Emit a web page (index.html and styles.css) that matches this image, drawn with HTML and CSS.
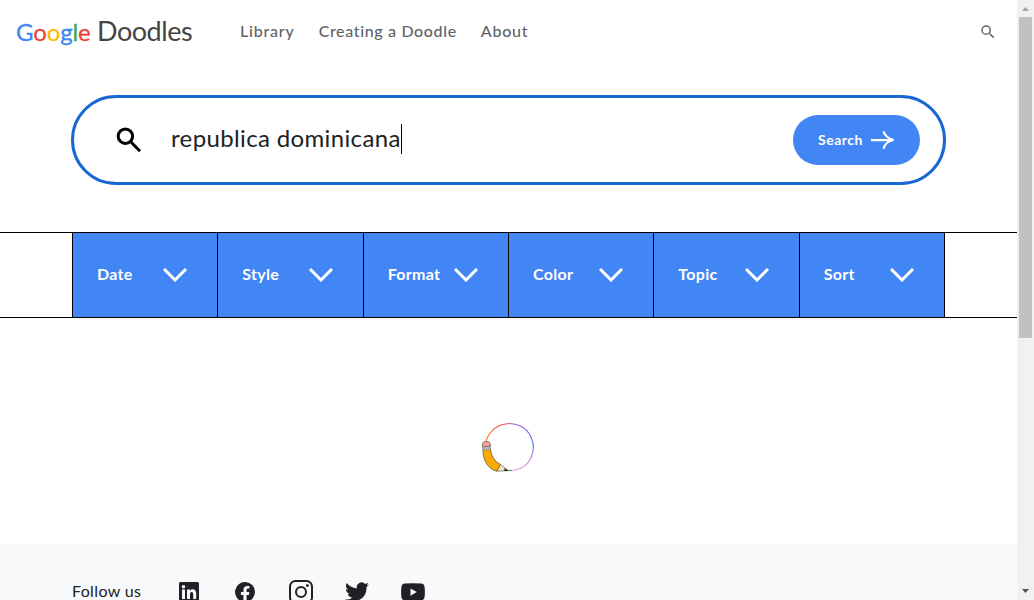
FILE: index.html
```html
<!DOCTYPE html>
<html lang="en">
<head>
<meta charset="utf-8">
<title>Google Doodles</title>
<link rel="stylesheet" href="styles.css">
</head>
<body>
<div class="page">
  <header class="header">
    <a class="logo"><span class="google"><span class="b">G</span><span class="r">o</span><span class="y">o</span><span class="b">g</span><span class="g">l</span><span class="r">e</span></span><span class="doodles">Doodles</span></a>
    <nav class="nav"><a class="n1">Library</a><a class="n2">Creating a Doodle</a><a class="n3">About</a></nav>
    <svg class="header-search" viewBox="0 0 24 24"><path d="M15.5 14h-.79l-.28-.27A6.47 6.47 0 0 0 16 9.5 6.5 6.5 0 1 0 9.5 16c1.61 0 3.09-.59 4.23-1.57l.27.28v.79l5 4.99L20.49 19zM9.5 14a4.5 4.5 0 1 1 0-9 4.5 4.5 0 0 1 0 9z"/></svg>
  </header>
  <form class="search">
    <svg class="search-icon" viewBox="0 0 26 26"><circle cx="9.4" cy="9.2" r="7.2"/><path d="M14.5 14.5 24 24.2"/></svg>
    <span class="query">republica dominicana</span><span class="caret"></span>
    <button type="button" class="submit"><span>Search</span><svg viewBox="0 0 24 20"><path d="M0 10.2C7 9.700 14 10.400 22 10M12.500 1.300C14 6.200 17 8.600 22.500 10 17 11.200 13.500 14 12.600 18.700"/></svg></button>
  </form>
  <div class="filters">
    <div class="filter"><span class="f1">Date</span><svg viewBox="0 0 24 14"><path d="M1 1 12 12 23 1"/></svg></div>
    <div class="filter"><span class="f2">Style</span><svg viewBox="0 0 24 14"><path d="M1 1 12 12 23 1"/></svg></div>
    <div class="filter"><span class="f3">Format</span><svg viewBox="0 0 24 14"><path d="M1 1 12 12 23 1"/></svg></div>
    <div class="filter"><span class="f4">Color</span><svg viewBox="0 0 24 14"><path d="M1 1 12 12 23 1"/></svg></div>
    <div class="filter"><span class="f5">Topic</span><svg viewBox="0 0 24 14"><path d="M1 1 12 12 23 1"/></svg></div>
    <div class="filter"><span class="f6">Sort</span><svg viewBox="0 0 24 14"><path d="M1 1 12 12 23 1"/></svg></div>
  </div>
  <main class="results">
    <svg class="loader" viewBox="0 0 56 54">
      <defs>
        <linearGradient id="warm" x1="0" y1="1" x2="1" y2="0"><stop offset="0" stop-color="#ff8a24"/><stop offset=".5" stop-color="#f4552f"/><stop offset="1" stop-color="#dc5878"/></linearGradient>
        <linearGradient id="cool" x1="0" y1="0" x2="1" y2="1"><stop offset="0" stop-color="#b45ae0"/><stop offset=".5" stop-color="#8b70ee"/><stop offset="1" stop-color="#3b82f6"/></linearGradient>
        <linearGradient id="pink" x1="1" y1="0" x2="0" y2="1"><stop offset="0" stop-color="#5b8df5"/><stop offset=".45" stop-color="#d98fd8"/><stop offset="1" stop-color="#f5a0cf"/></linearGradient>
      </defs>
      <g fill="none" stroke-width="1.2">
        <path stroke="url(#warm)" d="M6 21Q12 4 30 3.500"/>
        <path stroke="url(#cool)" d="M30 3.500Q51 5 53.500 27"/>
        <path stroke="url(#pink)" d="M53.500 27Q52 48 32 50.500"/>
        <path stroke="#48a36a" d="M26 50.500h6"/>
      </g>
      <path d="M3 28.500C2 40 9 50 17 51.200L20.500 44.500Q11.500 40 10.300 28.500Z" fill="#f9ab00" stroke="#665b4b" stroke-width=".8"/>
      <path d="M17 51.200 20.500 44.500 28 50.500Z" fill="#f8e6cd" stroke="#665b4b" stroke-width=".7"/>
      <path d="m24.500 48.300 4 2.200-4 .7Z" fill="#222"/>
      <path d="M2.500 26.700 10.500 26.200V29.500L3 30.200Z" fill="#aeb4bb" stroke="#777" stroke-width=".4"/>
      <path d="M2.500 26.700V24Q3 21.500 5 21.500H8Q10.300 21.700 10.500 26.200Z" fill="#f5a29b" stroke="#75605e" stroke-width=".8"/>
    </svg>
  </main>
  <footer class="footer">
    <span class="follow">Follow us</span>
    <svg viewBox="0 0 24 24"><path fill-rule="evenodd" d="M3.500 2h17A1.500 1.500 0 0 1 22 3.500v17a1.500 1.500 0 0 1-1.500 1.500h-17A1.500 1.500 0 0 1 2 20.500v-17A1.500 1.500 0 0 1 3.500 2zM5 9.500V19h3V9.500zM6.500 4.900a1.750 1.750 0 1 0 0 3.500 1.750 1.750 0 0 0 0-3.500zM10 9.500V19h3v-4.700c0-1.300.5-2.300 1.700-2.300s1.500 1 1.500 2.300V19h3v-5.200c0-2.700-1.200-4.500-3.500-4.500-1.300 0-2.200.7-2.700 1.500V9.500z"/></svg>
    <svg viewBox="0 0 24 24"><path d="M22 12a10 10 0 1 0-11.560 9.880V14.900H7.900V12h2.540V9.800c0-2.510 1.490-3.900 3.780-3.900 1.090 0 2.240.2 2.240.2v2.460H15.200c-1.240 0-1.630.77-1.630 1.560V12h2.780l-.45 2.900h-2.330v6.980A10 10 0 0 0 22 12z"/></svg>
    <svg viewBox="0 0 24 24" class="outline"><rect x="1" y="1" width="22" height="22" rx="5.500"/><circle cx="12" cy="12" r="5"/><circle class="dot" cx="18.400" cy="5.600" r="1.450"/></svg>
    <svg viewBox="0 0 24 24"><path d="M24 4.600a10 10 0 0 1-2.830.8 4.900 4.900 0 0 0 2.170-2.700c-1 .6-2 1-3.130 1.200a4.920 4.920 0 0 0-8.390 4.500A14 14 0 0 1 1.670 3.100a4.920 4.920 0 0 0 1.520 6.600A4.900 4.900 0 0 1 1 9v.1a4.930 4.930 0 0 0 3.950 4.800 5 5 0 0 1-2.220.1 4.920 4.920 0 0 0 4.600 3.400A9.900 9.900 0 0 1 0 19.500 14 14 0 0 0 21.540 7.100 10 10 0 0 0 24 4.600z"/></svg>
    <svg viewBox="0 0 24 24"><path fill-rule="evenodd" d="M4 3.600Q12 3 20 3.600 23 3.800 23.500 6.500 24.300 12 23.500 17.500 23 20.200 20 20.400 12 21 4 20.400 1 20.200.5 17.500-.3 12 .5 6.500 1 3.800 4 3.600zM9.500 8.500v7.200l6.300-3.600z"/></svg>
  </footer>
</div>
<div class="scrollbar">
  <svg viewBox="0 0 17 17"><path fill="#a3a3a3" d="M5 11h7L8.500 7z"/></svg>
  <div class="thumb"></div>
  <svg class="down" viewBox="0 0 17 17"><path fill="#505050" d="M5 6h7l-3.500 4z"/></svg>
</div>
</body>
</html>
```
FILE: styles.css
```css
* { box-sizing: border-box; }
body {
  margin: 0;
  width: 1034px;
  height: 600px;
  overflow: hidden;
  display: flex;
  background: #fff;
  color: #202124;
  font-family: Lato, "Open Sans", sans-serif;
}
.page { width: 1017px; height: 600px; overflow: hidden; }
.header { display: flex; align-items: center; height: 64px; padding: 0 20px 0 16px; }
.logo { display: flex; align-items: baseline; width: 224px; padding-bottom: 2px; line-height: 32px; white-space: nowrap; }
.google { width: 81px; font-size: 24px; letter-spacing: -.15px; -webkit-text-stroke: .3px; }
.doodles { font-size: 27px; letter-spacing: -.45px; color: #444; }
.b { color: #4285f4; }
.r { color: #ea4335; }
.y { color: #fbbc04; }
.g { color: #34a853; }
.nav { display: flex; gap: 24px; padding-bottom: 4px; color: #5f6368; font-size: 16px; font-weight: 500; white-space: nowrap; }
.n1 { letter-spacing: .8px; }
.n2 { letter-spacing: .65px; }
.n3 { letter-spacing: .75px; }
.header-search { width: 18px; height: 18px; margin-left: auto; fill: #5f6368; }
.search {
  display: flex;
  align-items: center;
  width: 875px;
  height: 90px;
  margin: 31px 0 0 71px;
  padding: 0 23px 0 42px;
  border: 3px solid #1967d2;
  border-radius: 45px;
}
.search-icon { width: 26px; height: 26px; margin-right: 29px; fill: none; stroke: #000; stroke-width: 3; }
.query { width: 230px; padding-bottom: 4px; font-size: 24px; line-height: 30px; letter-spacing: .36px; white-space: nowrap; }
.caret { width: 1px; height: 30px; margin-bottom: 2px; background: #000; }
.submit {
  display: flex;
  align-items: center;
  width: 127px;
  height: 50px;
  margin-left: auto;
  padding: 0 25px;
  justify-content: space-between;
  border: 0;
  border-radius: 25px;
  background: #4285f4;
  color: #fff;
  font: 700 14px Lato, sans-serif;
}
.submit span { padding-bottom: 2px; letter-spacing: .5px; }
.submit svg { width: 24px; height: 20px; fill: none; stroke: #fff; stroke-width: 2.2; }
.filters {
  display: grid;
  grid-template-columns: repeat(5, 145.33px) 1fr;
  height: 86px;
  margin-top: 47px;
  padding: 0 72px;
  border: solid #000;
  border-width: 1px 0;
}
.filter {
  display: flex;
  align-items: center;
  justify-content: space-between;
  padding: 0 30px 0 24px;
  border-left: 1px solid #000;
  background: #4285f4;
  color: #fff;
  font-size: 16px;
  font-weight: 700;
}
.filter:last-child { border-right: 1px solid #000; }
.filter span { padding-bottom: 4px; letter-spacing: .3px; }
.filter svg { width: 24px; height: 14px; fill: none; stroke: #fff; stroke-width: 3; }
.results { display: flex; justify-content: center; height: 226px; padding: 102px 2px 0 0; }
.loader { width: 56px; height: 54px; }
.footer { display: flex; align-items: center; gap: 32px; height: 96px; padding: 0 72px; background: #f8f9fa; }
.follow { width: 73px; padding-bottom: 4px; font-size: 16px; letter-spacing: .35px; white-space: nowrap; }
.footer svg { width: 24px; height: 24px; fill: #202124; }
.footer .outline { fill: none; stroke: #202124; stroke-width: 2; }
.footer .outline .dot { fill: #202124; stroke: none; }
.scrollbar { display: flex; flex-direction: column; align-items: center; width: 17px; height: 600px; background: #f1f1f1; }
.scrollbar svg { width: 17px; height: 17px; flex: none; }
.thumb { width: 13px; height: 321px; background: #c1c1c1; }
.scrollbar .down { margin-top: auto; }
```
